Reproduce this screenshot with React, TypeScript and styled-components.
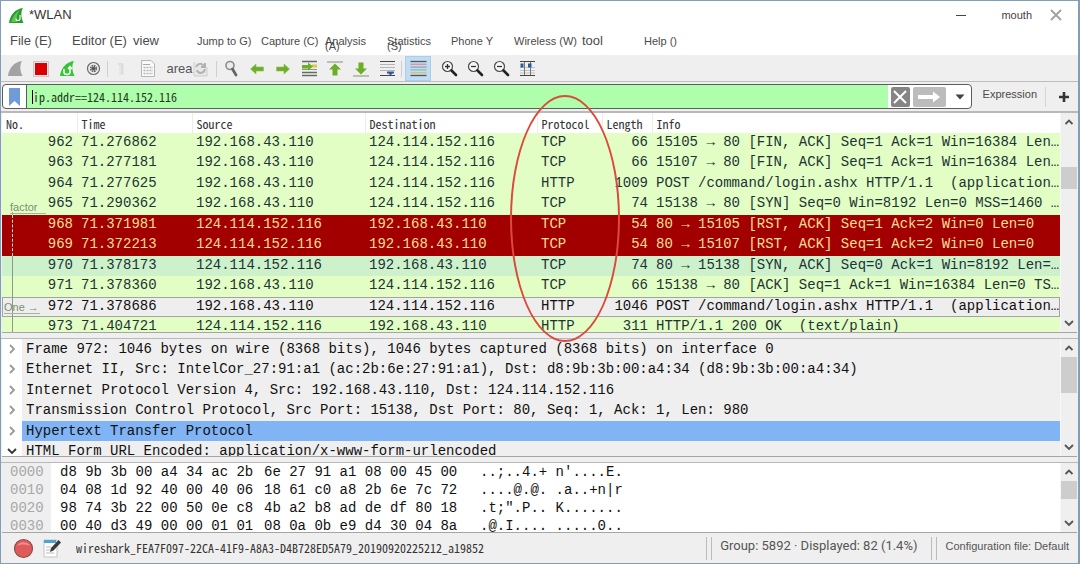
import React from "react";
import styled, { createGlobalStyle, css } from "styled-components";

const sans = `"Liberation Sans", Arial, sans-serif`;
const mono = `"Liberation Mono", "Courier New", monospace`;
const song = `"Noto Sans Mono CJK SC", "Liberation Mono", monospace`;

const GlobalStyle = createGlobalStyle`
  *, *::before, *::after { box-sizing: border-box; }
  body { margin: 0; background: #efefef; font-family: ${sans}; }
  button, input { font: inherit; color: inherit; margin: 0; padding: 0; border: 0; background: none; }
`;

const Window = styled.div`
  display: flex;
  flex-direction: column;
  height: 100vh;
  border: 1px solid #7f9fb9;
  border-right-width: 2px;
  background: #efefef;
  color: #333;
`;

const TitleBar = styled.header`
  display: flex;
  align-items: center;
  height: 28px;
  padding: 0 16px 0 7px;
  background: #fff;
`;

const Title = styled.h1`
  flex: 1;
  margin: 0 0 0 4px;
  font: 400 13px/20px ${sans};
  color: #333;
`;

const WindowButton = styled.button<{ $gap: number }>`
  display: flex;
  align-items: center;
  margin-left: ${(p) => p.$gap}px;
  font-size: 11px;
  line-height: 16px;
  color: #444;
`;

const MenuBar = styled.nav`
  display: grid;
  grid-template-columns: 62px 61px 64px 64px 64px 62px 64px 63px 68px 62px auto;
  align-items: center;
  height: 26px;
  padding: 0 0 2px 9px;
  background: #fff;
`;

const MenuItem = styled.button<{ $size: number }>`
  position: relative;
  text-align: left;
  font-size: ${(p) => p.$size}px;
  line-height: 16px;
  white-space: nowrap;
  color: #4a4a4a;
`;

const Mnemonic = styled.span`
  position: absolute;
  left: 0;
  top: 5px;
`;

const Toolbar = styled.div`
  display: flex;
  align-items: center;
  height: 27px;
  padding: 1px 0 0 1px;
  border-bottom: 1px solid #bdbdbd;
  flex-shrink: 0;
`;

const ToolButton = styled.button<{ $active?: boolean }>`
  display: flex;
  align-items: center;
  justify-content: center;
  width: 26px;
  height: 25px;
  ${(p) =>
    p.$active &&
    css`
      margin: 0 5px 0 2px;
      background: #bfdcf3;
      border: 1px solid #a9cfee;
    `}
`;

const AreaButton = styled(ToolButton)`
  width: 54px;
  padding-right: 2px;
  font-size: 13px;
  line-height: 16px;
  color: #555;
`;

const Divider = styled.span`
  width: 1px;
  height: 16px;
  margin: 0 1px;
  background: #cfcfcf;
`;

const FilterBar = styled.form`
  display: flex;
  align-items: center;
  height: 31px;
  padding: 0 8px 0 1px;
  border-bottom: 2px solid #b9b9b9;
  flex-shrink: 0;
`;

const FilterBox = styled.div`
  display: flex;
  flex: 1;
  align-items: center;
  height: 25px;
  border: 1px solid #5c5c5c;
  border-radius: 4px;
  background: #fff;
  overflow: hidden;
`;

const Bookmark = styled.button`
  display: flex;
  align-items: center;
  justify-content: center;
  width: 24px;
  height: 23px;
  border-right: 1px solid #5c5c5c;
`;

const FilterField = styled.div`
  display: flex;
  flex: 1;
  align-items: center;
  height: 23px;
  padding-left: 5px;
  background: #affeab;
`;

const Caret = styled.span`
  width: 1px;
  height: 14px;
  background: #000;
`;

const FilterInput = styled.input`
  flex: 1;
  min-width: 0;
  height: 23px;
  outline: 0;
  font: 12px/16px ${song};
  color: #1d3b1d;
`;

const FilterAction = styled.button<{ $width: number; $tone: string }>`
  display: flex;
  align-items: center;
  justify-content: center;
  width: ${(p) => p.$width}px;
  height: 20px;
  margin-left: 3px;
  border-radius: 2px;
  background: ${(p) => p.$tone};
`;

const ExpressionButton = styled.button`
  height: 20px;
  margin: 0 8px 6px 11px;
  font-size: 11px;
  line-height: 16px;
  color: #4a4a4a;
`;

const AddButton = styled.button`
  display: flex;
  align-items: center;
  height: 20px;
  padding-left: 12px;
  border-left: 1px solid #d5d5d5;
`;

const Panel = styled.section<{ $share: number }>`
  position: relative;
  display: flex;
  flex: ${(p) => p.$share} 1 0;
  min-height: 0;
  margin: 0 1px;
  border-bottom: 1px solid #a5a5a5;
`;

const Splitter = styled.div`
  height: 6px;
  flex-shrink: 0;
  border-bottom: 1px solid #b9b9b9;
`;

const Content = styled.div<{ $white?: boolean }>`
  position: relative;
  flex: 1;
  min-width: 0;
  overflow: hidden;
  background: ${(p) => (p.$white ? "#fff" : "#efefef")};
`;

const PacketTable = styled.table`
  width: 100%;
  table-layout: fixed;
  border-collapse: collapse;
  font: 14px/18px ${mono};
  background: #fff;
`;

const HeadCell = styled.th`
  height: 20px;
  padding: 2px 4px 0;
  border-right: 1px solid #ececec;
  text-align: left;
  font: 400 12px/16px ${song};
  color: #333;

  &:last-child { border-right: 0; }
`;

type Tone = "http" | "bad" | "syn" | "current";

const tones: Record<Tone, { bg: string; fg: string }> = {
  http: { bg: "#e2fec5", fg: "#1d3336" },
  bad: { bg: "#a20000", fg: "#fbdf95" },
  syn: { bg: "#ccf1cb", fg: "#1d3336" },
  current: { bg: "#eeeeee", fg: "#111" },
};

const PacketRow = styled.tr<{ $tone: Tone }>`
  height: 20px;
  background: ${(p) => tones[p.$tone].bg};
  color: ${(p) => tones[p.$tone].fg};
  ${(p) => p.$tone === "current" && "box-shadow: inset 0 0 0 1px #a3a3a3;"}

  &:nth-child(even) { height: 21px; }
`;

const Cell = styled.td<{ $right?: boolean }>`
  padding: 0 0 0 4px;
  ${(p) => p.$right && "padding-right: 4px; text-align: right;"}
  vertical-align: top;
  white-space: pre;
  overflow: hidden;
`;

const Related = styled.div<{ $top: number; $left: number }>`
  position: absolute;
  top: ${(p) => p.$top}px;
  left: ${(p) => p.$left}px;
  width: 36px;
  border-bottom: 1px solid #a4b592;
  font-size: 11px;
  line-height: 11px;
  white-space: nowrap;
  color: #7d8f74;
`;

const RelatedLine = styled.div<{ $top: number; $height: number; $dashed?: boolean }>`
  position: absolute;
  top: ${(p) => p.$top}px;
  left: 10px;
  height: ${(p) => p.$height}px;
  border-left: 1px ${(p) => (p.$dashed ? "dashed #f3d9c0" : "solid #8b9c85")};
`;

const Highlight = styled.div`
  position: absolute;
  z-index: 2;
  top: -18px;
  left: 508px;
  width: 110px;
  height: 247px;
  border: 2px solid #dc4a3c;
  border-radius: 50%;
  pointer-events: none;
`;

const Bar = styled.div`
  display: flex;
  flex-direction: column;
  width: 17px;
  border-left: 1px solid #f7f7f7;
  background: #efefef;
`;

const BarArrow = styled.button`
  display: flex;
  align-items: center;
  justify-content: center;
  height: 18px;
  flex-shrink: 0;
`;

const BarTrack = styled.div`
  flex: 1;
  min-height: 0;
`;

const Thumb = styled.div<{ $offset: number; $size: number }>`
  height: ${(p) => p.$size}px;
  margin-top: ${(p) => p.$offset}px;
  background: #cdcdcd;
`;

const Tree = styled.ul`
  margin: 0;
  padding: 0;
  list-style: none;
  font: 14px/20px ${mono};
  color: #111;
`;

const TreeItem = styled.li<{ $selected?: boolean }>`
  display: flex;
  height: 20px;
  white-space: pre;
  &:nth-child(even) { height: 21px; }

  > span {
    flex: 1;
    padding-left: 4px;
    ${(p) => p.$selected && "background: #80b4f5;"}
  }
`;

const Expander = styled.button`
  display: flex;
  align-items: center;
  justify-content: center;
  width: 20px;
  background: #fff;
`;

const HexRow = styled.div`
  display: grid;
  grid-template-columns: 49px 9px 204px 216px auto;
  font: 14px/18px ${mono};
  white-space: pre;
  color: #111;
`;

const Offset = styled.span`
  padding-left: 8px;
  background: #efefef;
  color: #a8a8a8;
`;

const HexText = styled.span<{ $first?: boolean }>`
  ${(p) => p.$first && "grid-column: 3;"}
`;

const StatusBar = styled.footer`
  display: flex;
  align-items: center;
  height: 30px;
  flex-shrink: 0;
  padding: 0 1px 0 12px;
`;

const StatusButton = styled.button`
  display: flex;
  margin-right: 9px;
`;

const FileName = styled.span`
  flex: 1;
  min-width: 0;
  margin-left: 5px;
  overflow: hidden;
  font: 12px/16px ${song};
  white-space: nowrap;
  color: #333;
`;

const Grip = styled.span`
  width: 6px;
  height: 23px;
  border: solid #bcbcbc;
  border-width: 0 1px;
`;

const StatusText = styled.span<{ $size: number; $gap: number }>`
  margin: 0 ${(p) => p.$gap}px 4px 8px;
  font-size: ${(p) => p.$size}px;
  line-height: 18px;
  white-space: nowrap;
  color: #555;
`;

const Summary = styled(StatusText)`
  font-family: Roboto, ${sans};
`;

const Fin = ({ fill, children }: { fill: string; children?: React.ReactNode }) => (
  <svg width="17" height="17" viewBox="0 0 17 17" aria-hidden="true">
    <path d="M1 16C2 8 7 2 15 1C12.500 5 13 11 15.500 16Z" fill={fill} />
    {children}
  </svg>
);

const Arrow = ({ turn }: { turn: number }) => (
  <svg width="16" height="16" viewBox="0 0 16 16" aria-hidden="true">
    <path
      transform={`rotate(${turn} 8 8)`}
      d="M1.500 8L7 3V6H14.500V10H7V13Z"
      fill="#6cae27"
      stroke="#8cc152"
      strokeWidth="0.600"
    />
  </svg>
);

const EdgeArrow = ({ down }: { down?: boolean }) => (
  <svg width="18" height="18" viewBox="0 0 18 18" aria-hidden="true">
    <g transform={down ? "rotate(180 9 9)" : undefined}>
      <path d="M1 2H17" stroke="#a8b0a0" strokeWidth="1.500" />
      <path d="M9 3.500L15 9.500H11.500V15.500H6.500V9.500H3Z" fill="#6cae27" />
    </g>
  </svg>
);

const Magnifier = ({ sign }: { sign: "plus" | "minus" }) => (
  <svg width="17" height="17" viewBox="0 0 17 17" fill="none" aria-hidden="true">
    <circle cx="6.500" cy="6.500" r="5" fill="#f7f7f7" stroke="#4b4b4b" strokeWidth="1.200" />
    <path d={sign === "plus" ? "M4 6.500H9M6.500 4V9" : "M4 6.500H9"} stroke="#333" strokeWidth="1.300" />
    <path d="M10.500 10.500L15 15" stroke="#222" strokeWidth="2.600" strokeLinecap="round" />
  </svg>
);

const Chevron = ({ dir, tone = "#555" }: { dir: "up" | "down" | "right"; tone?: string }) => (
  <svg width="10" height="10" viewBox="0 0 10 10" fill="none" aria-hidden="true">
    <path
      d={dir === "up" ? "M1.500 7L5 3.500L8.500 7" : dir === "down" ? "M1 3L5 7L9 3" : "M3 1L7 5L3 9"}
      stroke={tone}
      strokeWidth="1.800"
    />
  </svg>
);

const Lines = ({ colors }: { colors: string[] }) => (
  <svg width="17" height="17" viewBox="0 0 17 17" aria-hidden="true">
    {colors.map((c, i) => (
      <path key={i} d={`M0.500 ${1.5 + i * 2.8}H16.500`} stroke={c} strokeWidth="1.300" />
    ))}
  </svg>
);

const menus: { label: string; size: number; key?: string }[] = [
  { label: "File (E)", size: 13 },
  { label: "Editor (E)", size: 13 },
  { label: "view", size: 13 },
  { label: "Jump to G)", size: 11 },
  { label: "Capture (C)", size: 11 },
  { label: "Analysis", size: 11, key: "(A)" },
  { label: "Statistics", size: 11, key: "(S)" },
  { label: "Phone Y", size: 11 },
  { label: "Wireless (W)", size: 11 },
  { label: "tool", size: 13 },
  { label: "Help ()", size: 11 },
];

const A = "192.168.43.110";
const B = "124.114.152.116";

const packets: { tone: Tone; cells: string[] }[] = [
  { tone: "http", cells: ["962", "71.276862", A, B, "TCP", "66", "15105 → 80 [FIN, ACK] Seq=1 Ack=1 Win=16384 Len…"] },
  { tone: "http", cells: ["963", "71.277181", A, B, "TCP", "66", "15107 → 80 [FIN, ACK] Seq=1 Ack=1 Win=16384 Len…"] },
  { tone: "http", cells: ["964", "71.277625", A, B, "HTTP", "1009", "POST /command/login.ashx HTTP/1.1  (application…"] },
  { tone: "http", cells: ["965", "71.290362", A, B, "TCP", "74", "15138 → 80 [SYN] Seq=0 Win=8192 Len=0 MSS=1460 …"] },
  { tone: "bad", cells: ["968", "71.371981", B, A, "TCP", "54", "80 → 15105 [RST, ACK] Seq=1 Ack=2 Win=0 Len=0"] },
  { tone: "bad", cells: ["969", "71.372213", B, A, "TCP", "54", "80 → 15107 [RST, ACK] Seq=1 Ack=2 Win=0 Len=0"] },
  { tone: "syn", cells: ["970", "71.378173", B, A, "TCP", "74", "80 → 15138 [SYN, ACK] Seq=0 Ack=1 Win=8192 Len=…"] },
  { tone: "http", cells: ["971", "71.378360", A, B, "TCP", "66", "15138 → 80 [ACK] Seq=1 Ack=1 Win=16384 Len=0 TS…"] },
  { tone: "current", cells: ["972", "71.378686", A, B, "HTTP", "1046", "POST /command/login.ashx HTTP/1.1  (application…"] },
  { tone: "http", cells: ["973", "71.404721", B, A, "HTTP", "311", "HTTP/1.1 200 OK  (text/plain)"] },
];

const columns = [
  { name: "No.", width: 75 },
  { name: "Time", width: 115 },
  { name: "Source", width: 173 },
  { name: "Destination", width: 172 },
  { name: "Protocol", width: 65 },
  { name: "Length", width: 50 },
  { name: "Info", width: undefined },
];

const details = [
  "Frame 972: 1046 bytes on wire (8368 bits), 1046 bytes captured (8368 bits) on interface 0",
  "Ethernet II, Src: IntelCor_27:91:a1 (ac:2b:6e:27:91:a1), Dst: d8:9b:3b:00:a4:34 (d8:9b:3b:00:a4:34)",
  "Internet Protocol Version 4, Src: 192.168.43.110, Dst: 124.114.152.116",
  "Transmission Control Protocol, Src Port: 15138, Dst Port: 80, Seq: 1, Ack: 1, Len: 980",
  "Hypertext Transfer Protocol",
  "HTML Form URL Encoded: application/x-www-form-urlencoded",
];

const bytes = [
  ["0000", "d8 9b 3b 00 a4 34 ac 2b", "6e 27 91 a1 08 00 45 00", "..;..4.+ n'....E."],
  ["0010", "04 08 1d 92 40 00 40 06", "18 61 c0 a8 2b 6e 7c 72", "....@.@. .a..+n|r"],
  ["0020", "98 74 3b 22 00 50 0e c8", "4b a2 b8 ad de df 80 18", ".t;\".P.. K......."],
  ["0030", "00 40 d3 49 00 00 01 01", "08 0a 0b e9 d4 30 04 8a", ".@.I.... .....0.."],
];

const ScrollBar = ({ offset, size }: { offset: number; size: number }) => (
  <Bar>
    <BarArrow aria-label="Scroll up"><Chevron dir="up" /></BarArrow>
    <BarTrack><Thumb $offset={offset} $size={size} /></BarTrack>
    <BarArrow aria-label="Scroll down"><Chevron dir="down" /></BarArrow>
  </Bar>
);

export default function App() {
  return (
    <Window>
      <GlobalStyle />
      <TitleBar>
        <Fin fill="#2b9a2f">
          <path d="M3 15C5 9 8 5 12 3C9 7 8 11 9 15Z" fill="#5cc552" />
          <path d="M8 11.500a2 2 0 1 0 4 0V8" fill="none" stroke="#e9ffe4" strokeWidth="1.200" />
        </Fin>
        <Title>*WLAN</Title>
        <WindowButton $gap={0} aria-label="Minimize">
          <svg width="10" height="10" viewBox="0 0 10 10" aria-hidden="true">
            <path d="M0 5.500H10" stroke="#444" />
          </svg>
        </WindowButton>
        <WindowButton $gap={35}>mouth</WindowButton>
        <WindowButton $gap={18} aria-label="Close">
          <svg width="12" height="12" viewBox="0 0 12 12" aria-hidden="true">
            <path d="M1 1L11 11M11 1L1 11" stroke="#a0a0a0" strokeWidth="1.800" />
          </svg>
        </WindowButton>
      </TitleBar>

      <MenuBar>
        {menus.map((m) => (
          <MenuItem key={m.label} $size={m.size}>
            {m.label}
            {m.key && <Mnemonic>{m.key}</Mnemonic>}
          </MenuItem>
        ))}
      </MenuBar>

      <Toolbar role="toolbar">
        <ToolButton aria-label="Start capture"><Fin fill="#a3a3a3" /></ToolButton>
        <ToolButton aria-label="Stop capture">
          <svg width="16" height="16" viewBox="0 0 16 16" aria-hidden="true">
            <rect x="0.500" y="0.500" width="15" height="15" fill="#f1e6e6" stroke="#d0c4c4" />
            <rect x="2" y="2" width="12" height="12" fill="#d80000" />
          </svg>
        </ToolButton>
        <ToolButton aria-label="Restart capture">
          <Fin fill="#35c435">
            <path d="M5 9V12a3 2.500 0 0 0 6 0V8M9 9L11 6.500L13 9" fill="none" stroke="#fff" strokeWidth="1.500" />
          </Fin>
        </ToolButton>
        <ToolButton aria-label="Capture options">
          <svg width="15" height="15" viewBox="0 0 15 15" fill="none" stroke="#6a6a6a" aria-hidden="true">
            <circle cx="7.500" cy="7.500" r="6" strokeWidth="1.200" />
            <circle cx="7.500" cy="7.500" r="2.800" strokeWidth="1.800" strokeDasharray="1.600 0.600" />
            <circle cx="7.500" cy="7.500" r="1.800" fill="#555" stroke="none" />
          </svg>
        </ToolButton>
        <Divider />
        <ToolButton aria-label="Open file">
          <svg width="12" height="14" viewBox="0 0 12 14" aria-hidden="true">
            <path d="M3 1H8V13H3Z" fill="#e6e6e6" />
            <path d="M2 2H6M6 2V12" stroke="#dadada" strokeWidth="1.500" />
          </svg>
        </ToolButton>
        <ToolButton aria-label="Save file">
          <svg width="14" height="17" viewBox="0 0 14 17" aria-hidden="true">
            <path d="M0.500 0.500H10L13.500 4V16.500H0.500Z" fill="#fafafa" stroke="#b5b5b5" />
            <path d="M2 4.500H9" stroke="#a8a8a8" />
            <path d="M2.500 7.500H12M2.500 10.500H12M2.500 13.500H12" stroke="#b5b5b5" strokeWidth="1.500" strokeDasharray="2 1" />
          </svg>
        </ToolButton>
        <AreaButton>
          area
          <svg width="15" height="17" viewBox="0 0 15 17" fill="none" aria-hidden="true">
            <path d="M1 2V16H14V7" fill="#e8e8e8" stroke="#cfcfcf" />
            <path d="M3 7C5 3 9 3 11 6M12 3V7H8M12 9C11 14 5 14 4 10" stroke="#b2b2b2" strokeWidth="2" />
          </svg>
        </AreaButton>
        <Divider />
        <ToolButton aria-label="Find packet">
          <svg width="15" height="17" viewBox="0 0 15 17" fill="none" aria-hidden="true">
            <circle cx="6" cy="5.500" r="4" fill="#e8edf0" stroke="#8b8b8b" strokeWidth="1.600" />
            <path d="M8.500 9L12 15" stroke="#666" strokeWidth="2.800" strokeLinecap="round" />
          </svg>
        </ToolButton>
        <ToolButton aria-label="Previous packet"><Arrow turn={0} /></ToolButton>
        <ToolButton aria-label="Next packet"><Arrow turn={180} /></ToolButton>
        <ToolButton aria-label="Go to packet">
          <svg width="17" height="17" viewBox="0 0 17 17" aria-hidden="true">
            <path d="M1 1.500H16M1 12.500H16M1 15.500H16" stroke="#666b60" strokeWidth="1.500" />
            <path d="M11 6H16" stroke="#d8c84a" strokeWidth="3" />
            <path d="M1 9.500H16" stroke="#8a9a78" />
            <path d="M12 6.500L7 2.500V5H1V8.500H7V10.500Z" fill="#6cae27" />
          </svg>
        </ToolButton>
        <ToolButton aria-label="First packet"><EdgeArrow /></ToolButton>
        <ToolButton aria-label="Last packet"><EdgeArrow down /></ToolButton>
        <ToolButton aria-label="Auto scroll">
          <svg width="17" height="17" viewBox="0 0 17 17" aria-hidden="true">
            <path d="M1 1.500H16M1 15.500H16" stroke="#444" strokeWidth="1.200" />
            <path d="M1 4.500H16M1 7.500H16M1 10.500H16" stroke="#b5b5b5" />
            <path d="M8 11.500H15V13.500H13.500L11.500 15.500L9.500 13.500H8Z" fill="#2d5a9e" />
          </svg>
        </ToolButton>
        <Divider />
        <ToolButton $active aria-label="Colorize">
          <Lines colors={["#555", "#e58f8f", "#8f9fdc", "#8fc490", "#d8bd7a", "#555"]} />
        </ToolButton>
        <ToolButton aria-label="Zoom in"><Magnifier sign="plus" /></ToolButton>
        <ToolButton aria-label="Zoom out"><Magnifier sign="minus" /></ToolButton>
        <ToolButton aria-label="Normal size"><Magnifier sign="minus" /></ToolButton>
        <ToolButton aria-label="Resize columns">
          <svg width="17" height="17" viewBox="0 0 17 17" aria-hidden="true">
            <path d="M1 1.500H16M1 15.500H16" stroke="#444" strokeWidth="1.200" />
            <path d="M1 7.500H16M1 10.500H16M1 13H16" stroke="#c2c2c2" />
            <path d="M5.500 2V15M11.500 2V15" stroke="#777" />
            <path d="M1.500 3.500H4.500V7.500H1.500ZM9 3.500H12.500V7.500H9Z" fill="#2d5a9e" />
          </svg>
        </ToolButton>
      </Toolbar>

      <FilterBar onSubmit={(e) => e.preventDefault()}>
        <FilterBox>
          <Bookmark type="button" aria-label="Bookmarks">
            <svg width="11" height="18" viewBox="0 0 11 18" aria-hidden="true">
              <path d="M0 0H11V18L5.500 13L0 18Z" fill="#6f9bd8" />
            </svg>
          </Bookmark>
          <FilterField>
            <Caret />
            <FilterInput aria-label="Display filter" defaultValue="ip.addr==124.114.152.116" />
          </FilterField>
          <FilterAction type="button" $width={19} $tone="#858585" aria-label="Clear">
            <svg width="14" height="14" viewBox="0 0 14 14" aria-hidden="true">
              <path d="M1 1L13 13M13 1L1 13" stroke="#fff" strokeWidth="2" />
            </svg>
          </FilterAction>
          <FilterAction type="submit" $width={33} $tone="#bcbcbc" aria-label="Apply">
            <svg width="24" height="12" viewBox="0 0 24 12" aria-hidden="true">
              <path d="M1 4H16V0.500L23 6L16 11.500V8H1Z" fill="#fff" />
            </svg>
          </FilterAction>
          <FilterAction type="button" $width={22} $tone="transparent" aria-label="Recent filters">
            <svg width="10" height="6" viewBox="0 0 10 6" aria-hidden="true">
              <path d="M0.500 0.500H9.500L5 5.500Z" fill="#444" />
            </svg>
          </FilterAction>
        </FilterBox>
        <ExpressionButton type="button">Expression</ExpressionButton>
        <AddButton type="button" aria-label="Add filter">
          <svg width="12" height="12" viewBox="0 0 12 12" aria-hidden="true">
            <path d="M6 1V11M1 6H11" stroke="#333" strokeWidth="2.600" />
          </svg>
        </AddButton>
      </FilterBar>

      <Panel $share={221}>
        <Content $white>
          <PacketTable>
            <colgroup>
              {columns.map((c) => (
                <col key={c.name} width={c.width} />
              ))}
            </colgroup>
            <thead>
              <tr>
                {columns.map((c) => (
                  <HeadCell key={c.name} scope="col">{c.name}</HeadCell>
                ))}
              </tr>
            </thead>
            <tbody>
              {packets.map((p) => (
                <PacketRow key={p.cells[0]} $tone={p.tone}>
                  {p.cells.map((c, i) => (
                    <Cell key={i} $right={i === 0 || i === 5}>{c}</Cell>
                  ))}
                </PacketRow>
              ))}
            </tbody>
          </PacketTable>
          <RelatedLine $top={99} $height={3} />
          <RelatedLine $top={102} $height={41} $dashed />
          <RelatedLine $top={143} $height={77} />
          <Related $top={89} $left={8}>factor</Related>
          <Related $top={189} $left={2}>One →</Related>
        </Content>
        <ScrollBar offset={36} size={22} />
        <Highlight />
      </Panel>
      <Splitter />

      <Panel $share={118}>
        <Content>
          <Tree>
            {details.map((d, i) => (
              <TreeItem key={d} $selected={i === 4}>
                <Expander aria-label={i === 5 ? "Collapse" : "Expand"}>
                  <Chevron dir={i === 5 ? "down" : "right"} tone={i === 5 ? "#333" : "#999"} />
                </Expander>
                <span>{d}</span>
              </TreeItem>
            ))}
          </Tree>
        </Content>
        <ScrollBar offset={0} size={36} />
      </Panel>
      <Splitter />

      <Panel $share={70}>
        <Content $white>
          {bytes.map(([offset, first, second, text]) => (
            <HexRow key={offset}>
              <Offset>{offset}</Offset>
              <HexText $first>{first}</HexText>
              <HexText>{second}</HexText>
              <HexText>{text}</HexText>
            </HexRow>
          ))}
        </Content>
        <ScrollBar offset={0} size={18} />
      </Panel>

      <StatusBar>
        <StatusButton aria-label="Expert information">
          <svg width="21" height="21" viewBox="0 0 21 21" aria-hidden="true">
            <circle cx="10.500" cy="10.500" r="9" fill="#df5b5b" stroke="#8b4a4a" strokeWidth="1.200" />
            <path d="M4 8C6 3 15 3 17 8C13 6 8 6 4 8Z" fill="#ee9090" />
          </svg>
        </StatusButton>
        <StatusButton aria-label="Capture comment">
          <svg width="19" height="20" viewBox="0 0 19 20" aria-hidden="true">
            <path d="M1 2H14V19H1Z" fill="#fdfdfd" stroke="#c4c4c4" />
            <path d="M1 2H13V5H1Z" fill="#4fa3d1" />
            <path d="M3 9H8M3 12H7M3 15H11" stroke="#bbb" />
            <path d="M7 14L8 10L15.500 2L18 4.500L10.500 12.500Z" fill="#3b3b3b" />
          </svg>
        </StatusButton>
        <FileName>wireshark_FEA7F097-22CA-41F9-A8A3-D4B728ED5A79_20190920225212_a19852</FileName>
        <Grip />
        <Summary $size={13} $gap={14}>Group: 5892 · Displayed: 82 (1.4%)</Summary>
        <Grip />
        <StatusText $size={11} $gap={8}>Configuration file: Default</StatusText>
      </StatusBar>
    </Window>
  );
}
